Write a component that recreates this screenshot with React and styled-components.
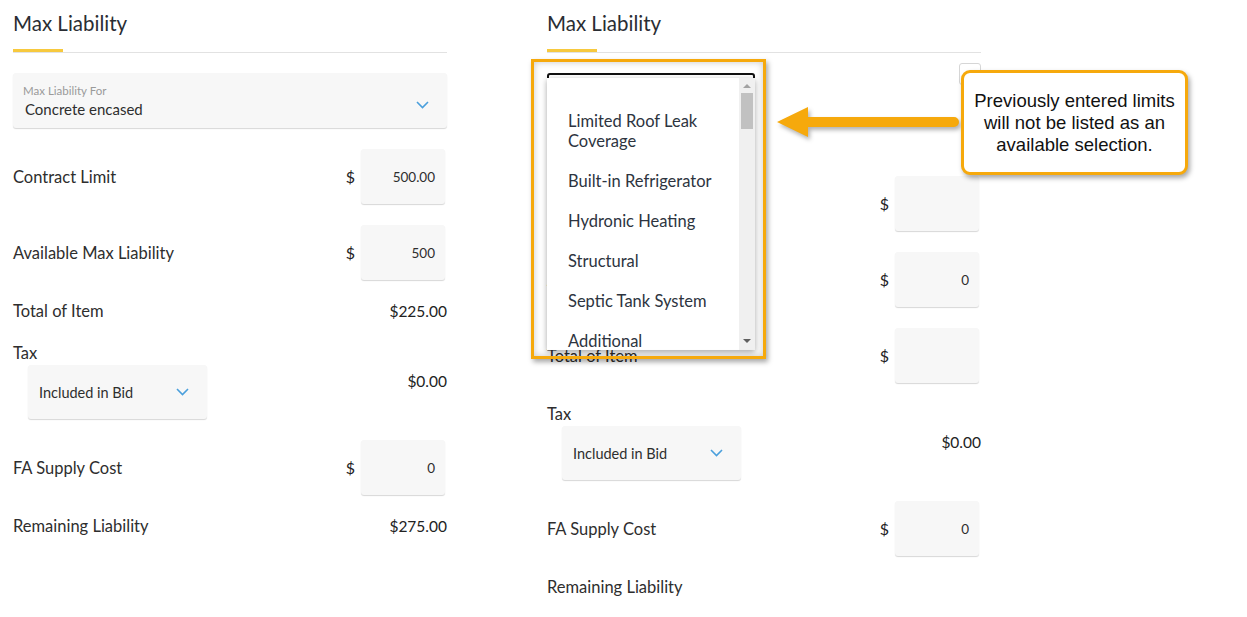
import React from 'react';
import styled, { createGlobalStyle } from 'styled-components';

const GlobalStyle = createGlobalStyle`
  body {
    margin: 0;
    background: #fff;
    font-family: 'Lato', 'Open Sans', sans-serif;
    color: #2e2e2e;
  }
`;

const Page = styled.div`
  position: relative;
  display: flex;
  gap: 100px;
  padding-left: 13px;
  width: 1247px;
  height: 617px;
  box-sizing: border-box;
  overflow: hidden;
`;

const Panel = styled.div`
  width: 434px;
  display: flex;
  flex-direction: column;
`;

const Header = styled.div`
  padding-top: 10px;
  border-bottom: 1px solid #e2e2e2;
`;

const Title = styled.div`
  font-size: 20.5px;
  line-height: 26px;
  color: #2a2d33;
`;

const Accent = styled.div`
  width: 50px;
  height: 3px;
  margin-top: 13px;
  background: #f7c93e;
`;

const Select = styled.div`
  margin-top: 20px;
  height: 55px;
  box-sizing: border-box;
  padding: 8px 18px 0 10px;
  background: #f7f7f7;
  border-radius: 3px;
  box-shadow: 0 1px 1px rgba(0, 0, 0, 0.16);
  display: flex;
  align-items: center;
`;

const SelectText = styled.div`
  flex: 1;
  display: flex;
  flex-direction: column;
  margin-top: -8px;
`;

const SelectLabel = styled.span`
  font-size: 11.5px;
  color: #9a9a9a;
  line-height: 16px;
`;

const SelectValue = styled.span`
  font-size: 15px;
  color: #2e2e2e;
  line-height: 20px;
  padding-left: 2px;
`;

const SelectRow = styled.div`
  display: flex;
  justify-content: space-between;
  align-items: flex-start;
  height: 102px;
`;

const FocusedSelect = styled.div`
  margin-top: 20px;
  width: 208px;
  height: 55px;
  box-sizing: border-box;
  border: 2px solid #111;
  border-radius: 3px;
  background: #fff;
`;

const TinyBox = styled.div`
  margin-top: 10px;
  width: 22px;
  height: 22px;
  box-sizing: border-box;
  border: 1px solid #d6d6d6;
  border-radius: 3px;
`;

const Row = styled.div`
  display: flex;
  align-items: center;
  margin-top: ${(p) => (p.$input ? '21px' : '20px')};
  height: ${(p) => (p.$input ? '55px' : '22px')};
`;

const Label = styled.div`
  flex: 1;
  font-size: 16.5px;
  line-height: 22px;
  color: #2e2e2e;
`;

const Dollar = styled.span`
  font-size: 16px;
  color: #222;
  margin-right: 6px;
`;

const NumberBox = styled.div`
  width: 84px;
  height: 55px;
  margin-right: 2px;
  box-sizing: border-box;
  padding-right: 10px;
  background: #f7f7f7;
  border-radius: 3px;
  box-shadow: 0 1px 1px rgba(0, 0, 0, 0.16);
  display: flex;
  align-items: center;
  justify-content: flex-end;
  font-size: 13.5px;
  color: #2e2e2e;
`;

const Amount = styled.div`
  font-size: 15.5px;
  line-height: 22px;
  color: #222;
`;

const TaxRow = styled.div`
  display: flex;
  justify-content: space-between;
  align-items: flex-start;
  margin-top: 1px;
`;

const TaxSelect = styled.div`
  margin-left: 15px;
  width: 179px;
  height: 54px;
  box-sizing: border-box;
  padding: 0 18px 0 11px;
  background: #f7f7f7;
  border-radius: 3px;
  box-shadow: 0 1px 1px rgba(0, 0, 0, 0.16);
  display: flex;
  align-items: center;
  justify-content: space-between;
  font-size: 14.5px;
  color: #2e2e2e;
`;

const TaxAmount = styled(Amount)`
  padding-top: 5px;
`;

/* overlays: native option list, highlight, arrow and callout */
const OptionList = styled.div`
  position: absolute;
  left: 547px;
  top: 78px;
  width: 208px;
  height: 272px;
  background: #fff;
  box-shadow: 0 2px 6px rgba(0, 0, 0, 0.35);
  display: flex;
  overflow: hidden;
`;

const Options = styled.div`
  flex: 1;
  padding-top: 1px;
`;

const Option = styled.div`
  padding: ${(p) => (p.$blank ? '0' : '10px 14px 10px 21px')};
  height: ${(p) => (p.$blank ? '22px' : 'auto')};
  font-size: 16.5px;
  line-height: 20px;
  color: #2d3440;
`;

const Scrollbar = styled.div`
  width: 16px;
  background: #f0f0f0;
  display: flex;
  flex-direction: column;
  align-items: center;
`;

const ScrollArrow = styled.div`
  width: 0;
  height: 0;
  border-left: 4px solid transparent;
  border-right: 4px solid transparent;
  ${(p) => (p.$down ? 'border-top: 4px solid #606060;' : 'border-bottom: 4px solid #a3a3a3;')}
  margin-top: ${(p) => (p.$down ? 'auto' : '6px')};
  margin-bottom: ${(p) => (p.$down ? '7px' : '0')};
`;

const Thumb = styled.div`
  width: 12px;
  height: 36px;
  margin-top: 5px;
  background: #c1c1c1;
`;

const Highlight = styled.div`
  position: absolute;
  left: 531px;
  top: 59px;
  width: 235px;
  height: 300px;
  box-sizing: border-box;
  border: 3px solid #f6a90c;
  box-shadow: 2px 3px 5px rgba(0, 0, 0, 0.35), inset 0 0 7px rgba(0, 0, 0, 0.22);
`;

const Arrow = styled.svg`
  position: absolute;
  left: 770px;
  top: 100px;
  filter: drop-shadow(2px 3px 2px rgba(0, 0, 0, 0.3));
`;

const Callout = styled.div`
  position: absolute;
  left: 961px;
  top: 70px;
  width: 227px;
  height: 105px;
  box-sizing: border-box;
  border: 3px solid #f6a90c;
  border-radius: 9px;
  background: #fff;
  box-shadow: 2px 3px 5px rgba(0, 0, 0, 0.35);
  display: flex;
  align-items: center;
  justify-content: center;
  text-align: center;
  font-family: 'Liberation Sans', Arial, sans-serif;
  font-size: 18.5px;
  line-height: 22px;
  color: #111;
  white-space: nowrap;
`;

const Chevron = () => (
  <svg width="13" height="8" viewBox="0 0 13 8">
    <polyline points="1,1 6.5,6.5 12,1" fill="none" stroke="#4a9fdc" strokeWidth="1.6" />
  </svg>
);

function PanelHeader() {
  return (
    <Header>
      <Title>Max Liability</Title>
      <Accent />
    </Header>
  );
}

function TaxBlock() {
  return (
    <>
      <Row>
        <Label>Tax</Label>
      </Row>
      <TaxRow>
        <TaxSelect>
          Included in Bid
          <Chevron />
        </TaxSelect>
        <TaxAmount>$0.00</TaxAmount>
      </TaxRow>
    </>
  );
}

function InputRow({ label, value }) {
  return (
    <Row $input>
      <Label>{label}</Label>
      <Dollar>$</Dollar>
      <NumberBox>{value}</NumberBox>
    </Row>
  );
}

export default function App() {
  const options = [
    'Limited Roof Leak Coverage',
    'Built-in Refrigerator',
    'Hydronic Heating',
    'Structural',
    'Septic Tank System',
    'Additional',
  ];

  return (
    <>
      <GlobalStyle />
      <Page>
        <Panel>
          <PanelHeader />
          <Select>
            <SelectText>
              <SelectLabel>Max Liability For</SelectLabel>
              <SelectValue>Concrete encased</SelectValue>
            </SelectText>
            <Chevron />
          </Select>
          <InputRow label="Contract Limit" value="500.00" />
          <InputRow label="Available Max Liability" value="500" />
          <Row>
            <Label>Total of Item</Label>
            <Amount>$225.00</Amount>
          </Row>
          <TaxBlock />
          <InputRow label="FA Supply Cost" value="0" />
          <Row>
            <Label>Remaining Liability</Label>
            <Amount>$275.00</Amount>
          </Row>
        </Panel>

        <Panel>
          <PanelHeader />
          <SelectRow>
            <FocusedSelect />
            <TinyBox />
          </SelectRow>
          <InputRow label="Contract Limit" value="" />
          <InputRow label="Available Max Liability" value="0" />
          <InputRow label="Total of Item" value="" />
          <TaxBlock />
          <InputRow label="FA Supply Cost" value="0" />
          <Row>
            <Label>Remaining Liability</Label>
          </Row>
        </Panel>

        <OptionList>
          <Options>
            <Option $blank />
            {options.map((o) => (
              <Option key={o}>{o}</Option>
            ))}
          </Options>
          <Scrollbar>
            <ScrollArrow />
            <Thumb />
            <ScrollArrow $down />
          </Scrollbar>
        </OptionList>
        <Highlight />
        <Arrow width="195" height="45" viewBox="0 0 195 45">
          <path d="M7 22 L38 7 L38 17 L184 17 A5 5 0 0 1 184 27 L38 27 L38 37 Z" fill="#f6a90c" />
        </Arrow>
        <Callout>
          Previously entered limits
          <br />
          will not be listed as an
          <br />
          available selection.
        </Callout>
      </Page>
    </>
  );
}
